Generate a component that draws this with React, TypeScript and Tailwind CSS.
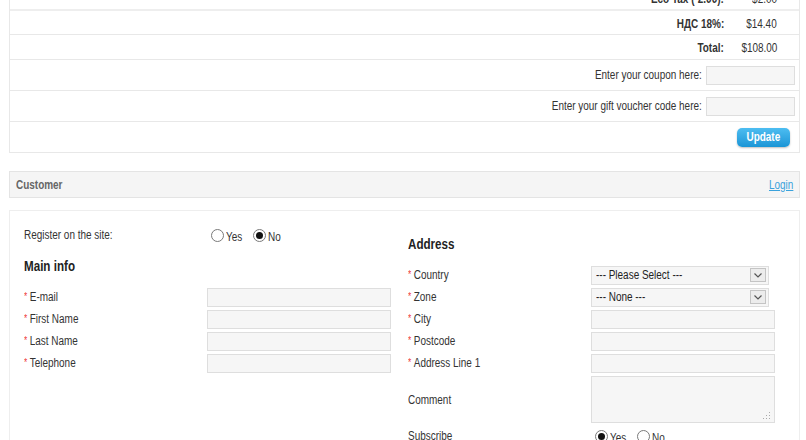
import React from 'react';

const font = { fontFamily: "'Liberation Sans', Arial, sans-serif" };

// the reference renders a narrow Arial; squeeze text horizontally to match
const T = ({ children, align = 'left', className = '' }: { children: React.ReactNode; align?: 'left' | 'right' | 'center'; className?: string }) => (
    <span
        className={`inline-block whitespace-nowrap scale-x-[0.83] ${align === 'right' ? 'origin-right' : align === 'center' ? 'origin-center' : 'origin-left'} ${className}`}
    >
        {children}
    </span>
);

const Radio = ({ checked, label, w }: { checked?: boolean; label: string; w: string }) => (
    <span className="flex items-center">
        <span className="w-[13px] h-[13px] rounded-full border border-[#7a7a7a] bg-white flex items-center justify-center">
            {checked && <span className="w-[7px] h-[7px] rounded-full bg-[#111]" />}
        </span>
        <span className={`ml-[2px] mt-[3px] text-[12px] text-[#333] ${w}`}>
            <T>{label}</T>
        </span>
    </span>
);

const Req = () => <span className="text-[#e33] text-[10px] mr-[3px] relative -top-[1px]">*</span>;

const Field = ({ label, required = true, children }: { label: string; required?: boolean; children?: React.ReactNode }) => (
    <div className="h-[22px] flex items-center">
        <div className="w-[183px] text-[12px] text-[#333]">
            <T>
                {required && <Req />}
                {label}
            </T>
        </div>
        {children ?? <div className="w-[184px] h-[19px] border border-[#dedede] bg-[#f6f6f6]" />}
    </div>
);

const Select = ({ value }: { value: string }) => (
    <div className="w-[178px] h-[19px] border border-[#dedede] bg-[#f6f6f6] flex items-center justify-between pl-[4px] pr-[2px]">
        <span className="text-[12px] text-[#222]">
            <T>{value}</T>
        </span>
        <span className="w-[16px] h-[14px] border border-[#c4c4c4] bg-[#ececec] flex items-center justify-center">
            <svg width="8" height="5" viewBox="0 0 8 5">
                <path d="M0.5 0.5 L4 4 L7.5 0.5" fill="none" stroke="#555" strokeWidth="1.2" />
            </svg>
        </span>
    </div>
);

const TotalRow = ({ label, value, h, border = 'border-b border-[#e8e8e8]' }: { label: string; value: string; h: string; border?: string }) => (
    <div className={`flex items-center ${border} ${h}`}>
        <div className="flex-1 text-right font-bold text-[12px] text-[#333] pt-[2px]">
            <T align="right">{label}</T>
        </div>
        <div className="w-[75px] text-right pr-[22px] text-[12px] text-[#333] pt-[2px]">
            <T align="right">{value}</T>
        </div>
    </div>
);

const CodeRow = ({ label }: { label: string }) => (
    <div className="flex items-center justify-end border-b border-[#e8e8e8] h-[31px] pr-[4px]">
        <span className="text-[12px] mr-[4px]">
            <T align="right">{label}</T>
        </span>
        <div className="w-[89px] h-[19px] border border-[#dedede] bg-[#f6f6f6]" />
    </div>
);

export default function App() {
    return (
        <div className="w-[806px] h-[440px] overflow-hidden bg-white text-[#333]" style={font}>
            <div className="ml-[9px] w-[791px] -mt-[13px] border-l border-r border-[#e8e8e8]">
                <TotalRow label="Eco Tax (-2.00):" value="$2.00" h="h-[24px]" border="border-b-2 border-[#eee]" />
                <TotalRow label="НДС 18%:" value="$14.40" h="h-[24px]" />
                <TotalRow label="Total:" value="$108.00" h="h-[25px]" />
                <CodeRow label="Enter your coupon here:" />
                <CodeRow label="Enter your gift voucher code here:" />
                <div className="flex items-center justify-end border-b border-[#e8e8e8] h-[31px] pr-[9px]">
                    <button className="w-[53px] h-[19px] rounded-[5px] bg-gradient-to-b from-[#4cbdf1] to-[#1895d6] text-white font-bold text-[12px] shadow-[0_1px_2px_rgba(0,0,0,0.25)]">
                        <T align="center">Update</T>
                    </button>
                </div>
            </div>

            <div className="ml-[9px] w-[791px] mt-[18px] h-[27px] border border-[#e4e4e4] bg-[#f5f5f5] flex items-center justify-between pl-[6px] pr-[6px]">
                <span className="font-bold text-[12px] text-[#666]">
                    <T>Customer</T>
                </span>
                <a className="text-[12px] text-[#3aa2dc]">
                    <T align="right" className="underline">Login</T>
                </a>
            </div>

            <div className="ml-[9px] w-[791px] mt-[12px] h-[300px] border border-[#eee] pl-[14px] pt-[13px] flex gap-[17px]">
                <div className="w-[367px]">
                    <div className="h-[22px] flex items-center">
                        <div className="w-[187px] text-[12px]">
                            <T>Register on the site:</T>
                        </div>
                        <div className="flex items-center gap-[9px]">
                            <Radio label="Yes" w="w-[18px]" />
                            <Radio label="No" w="w-[14px]" checked />
                        </div>
                    </div>
                    <div className="mt-[12px] h-[16px] leading-[16px] text-[14px] font-bold text-[#222]">
                        <T>Main info</T>
                    </div>
                    <div className="mt-[12px]">
                        <Field label="E-mail" />
                        <Field label="First Name" />
                        <Field label="Last Name" />
                        <Field label="Telephone" />
                    </div>
                </div>
                <div className="w-[367px]">
                    <div className="mt-[12px] h-[16px] leading-[16px] text-[14px] font-bold text-[#222]">
                        <T>Address</T>
                    </div>
                    <div className="mt-[12px]">
                        <Field label="Country">
                            <Select value="--- Please Select ---" />
                        </Field>
                        <Field label="Zone">
                            <Select value="--- None ---" />
                        </Field>
                        <Field label="City" />
                        <Field label="Postcode" />
                        <Field label="Address Line 1" />
                        <div className="h-[51px] flex items-center">
                            <div className="w-[183px] text-[12px]">
                                <T>Comment</T>
                            </div>
                            <div className="w-[184px] h-[47px] border border-[#dedede] bg-[#f6f6f6] flex items-end justify-end p-[3px]">
                                <svg width="8" height="8" viewBox="0 0 8 8">
                                    <rect x="6" y="1" width="1" height="1" fill="#aaa" />
                                    <rect x="3" y="4" width="1" height="1" fill="#aaa" />
                                    <rect x="6" y="4" width="1" height="1" fill="#aaa" />
                                    <rect x="0" y="7" width="1" height="1" fill="#aaa" />
                                    <rect x="3" y="7" width="1" height="1" fill="#aaa" />
                                    <rect x="6" y="7" width="1" height="1" fill="#aaa" />
                                </svg>
                            </div>
                        </div>
                        <div className="h-[22px] flex items-center">
                            <div className="w-[187px] text-[12px]">
                                <T>Subscribe</T>
                            </div>
                            <div className="flex items-center gap-[9px]">
                                <Radio label="Yes" w="w-[18px]" checked />
                                <Radio label="No" w="w-[14px]" />
                            </div>
                        </div>
                    </div>
                </div>
            </div>
        </div>
    );
}
